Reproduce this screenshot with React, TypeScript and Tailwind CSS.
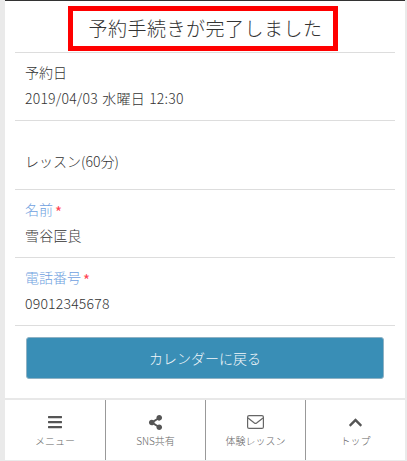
import { FaBars, FaChevronUp, FaShareAlt } from 'react-icons/fa';

const font = { fontFamily: '"Noto Sans CJK JP", "Noto Sans", sans-serif' };

const Field = ({ label, value }: { label: string; value: string }) => (
  <div className="border-b border-[#dddddd] mx-[10px] px-[10px] h-[68px] pt-[8px]">
    <div className="flex items-center h-[22px] text-[14px] font-light text-[#6f9fe0]">
      {label}
      <span className="text-[#ff4455] text-[15px] font-normal leading-none ml-[2px] pt-[5px]">*</span>
    </div>
    <div className="mt-[4px] h-[22px] leading-[22px] text-[14px] font-light tracking-[0.2px] text-[#333333]">{value}</div>
  </div>
);

const NavItem = ({ icon, label }: { icon: React.ReactNode; label: string }) => (
  <div className="w-[100px] flex flex-col items-center border-l border-[#999999] first:border-l-0 pt-[14px]">
    <div className="h-[16px] flex items-center justify-center">{icon}</div>
    <div className="mt-[4px] text-[10px] leading-[14px] font-light text-[#666666]">{label}</div>
  </div>
);

export default function App() {
  return (
    <div style={font} className="w-[407px] h-[461px] overflow-hidden bg-white border-l-[5px] border-r-[2px] border-b border-[#eaeaea]">
      <div className="h-px bg-[#333333]" />

      {/* Title */}
      <div className="pt-[5px] pl-[63px]">
        <div className="w-[270px] h-[45px] pl-[5px] border-[5px] border-[#ff0000] flex items-center justify-center text-[19px] tracking-[0.5px] font-light text-[#333333]">
          予約手続きが完了しました
        </div>
      </div>

      <div className="mt-px border-y border-[#dddddd] mx-[10px] px-[10px] h-[69px] pt-[8px]">
        <div className="h-[22px] leading-[22px] text-[14px] font-light text-[#333333]">予約日</div>
        <div className="mt-[4px] h-[22px] leading-[22px] text-[14px] font-light tracking-[0.2px] [word-spacing:1px] text-[#333333]">2019/04/03 水曜日 12:30</div>
      </div>

      <div className="border-b border-[#dddddd] mx-[10px] px-[10px] h-[69px] pt-[29px]">
        <div className="h-[22px] leading-[22px] text-[14px] font-light text-[#333333]">レッスン(60分)</div>
      </div>

      <Field label="名前" value="雪谷匡良" />
      <Field label="電話番号" value="09012345678" />

      <div className="mx-[21px] mt-[11px]">
        <button className="w-full h-[42px] rounded-[3px] bg-[#398eb6] border border-[#8fb2c4] text-[14px] font-light text-[#f2f7fa]">
          カレンダーに戻る
        </button>
      </div>

      {/* Bottom menu */}
      <div className="mt-[19px] h-[62px] flex border-t-[2px] border-[#e8e8e8]">
        <NavItem label="メニュー" icon={<FaBars size={16} className="text-[#555555]" />} />
        <NavItem label="SNS共有" icon={<FaShareAlt size={15} className="text-[#555555]" />} />
        <NavItem
          label="体験レッスン"
          icon={
            <svg width="17" height="14" viewBox="0 0 17 14" fill="none" stroke="#666666" strokeWidth="1.2">
              <rect x="0.6" y="0.6" width="15.8" height="12.8" rx="1.5" />
              <path d="M1 3 L7.4 8 Q8.5 8.8 9.6 8 L16 3" />
            </svg>
          }
        />
        <NavItem label="トップ" icon={<FaChevronUp size={15} className="text-[#555555]" />} />
      </div>
    </div>
  );
}
